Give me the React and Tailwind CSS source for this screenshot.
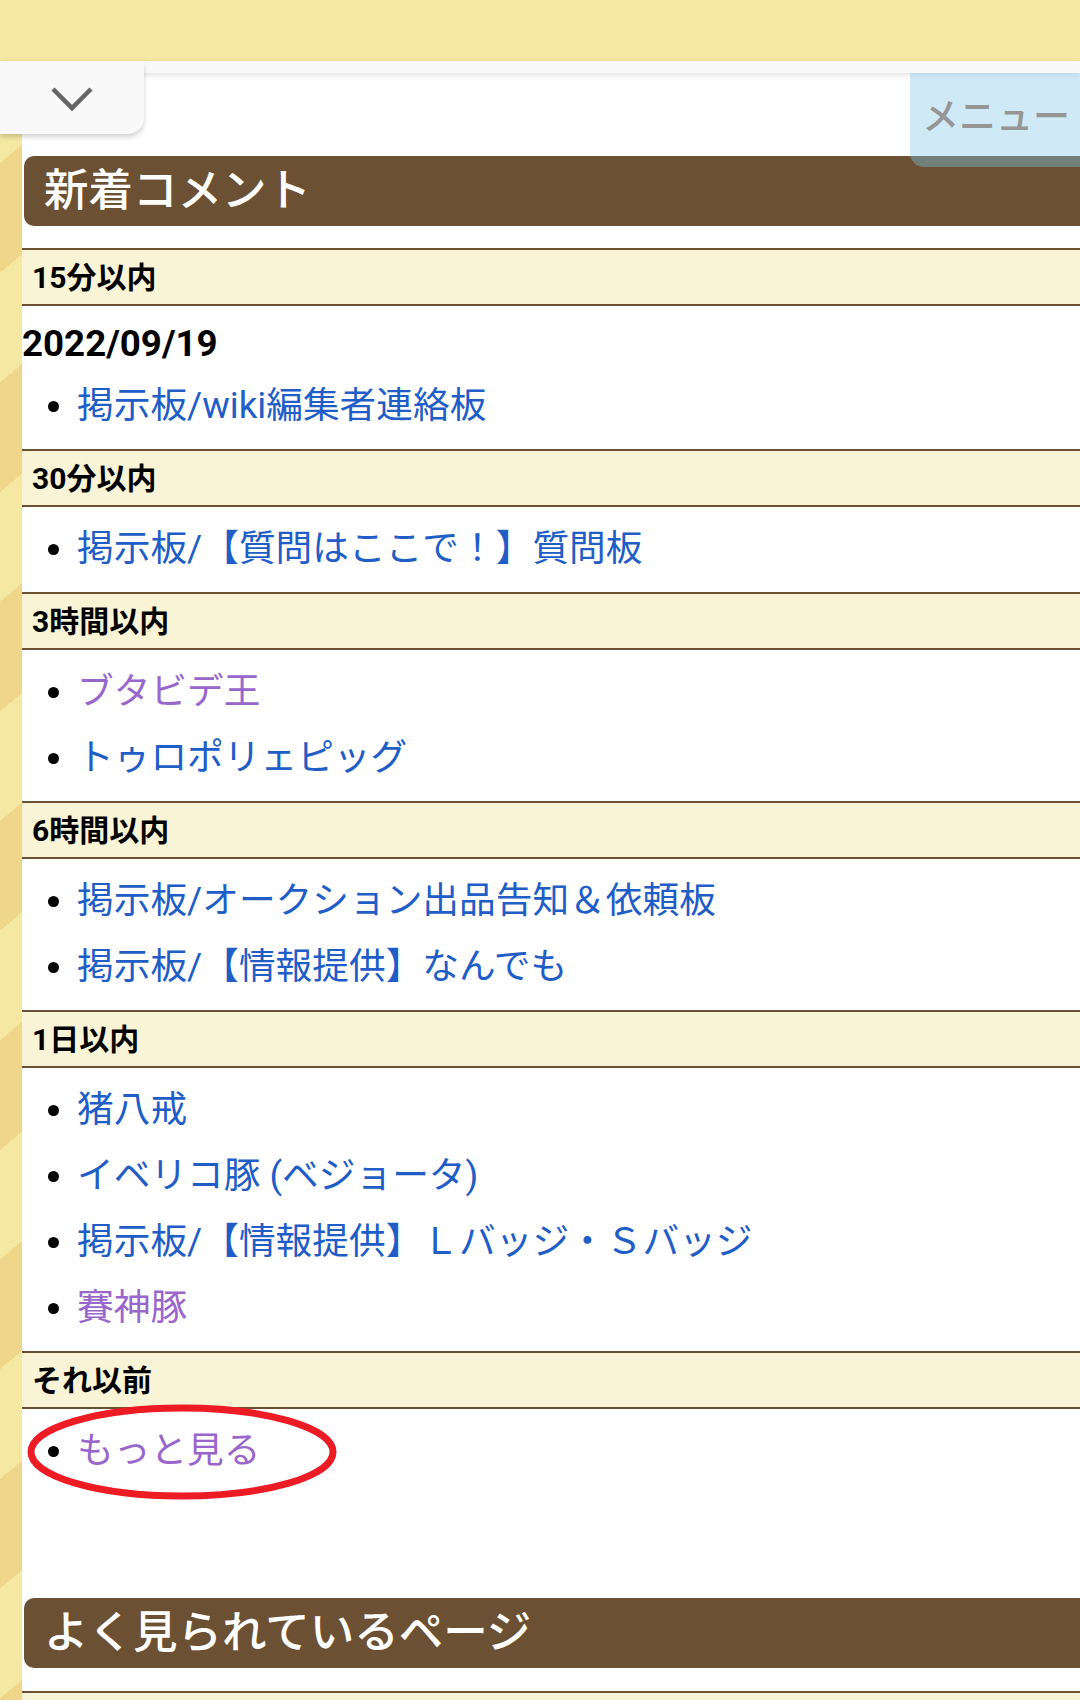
import React from "react";

const BLUE = "text-[#215dc6]";
const PURPLE = "text-[#9966cc]";

function HeaderRow({ children }) {
  return (
    <div className="h-[58px] border-y-2 border-[#6b5033] bg-[#faf4d6] flex items-center pl-[10px] text-[30px] font-bold text-black">
      {children}
    </div>
  );
}

function Item({ children, visited }) {
  return (
    <li className="h-[66px] flex items-center">
      <span className="ml-[26px] w-[11px] h-[11px] rounded-full bg-black shrink-0" />
      <span className={`ml-[18px] text-[36.7px] whitespace-nowrap ${visited ? PURPLE : BLUE}`}>{children}</span>
    </li>
  );
}

function Heading({ children, className = "" }) {
  return (
    <div className={`ml-[2px] h-[70px] rounded-l-[10px] bg-[#6b5033] flex items-center pl-[20px] text-[44.5px] font-medium text-white whitespace-nowrap ${className}`}>
      {children}
    </div>
  );
}

export default function App() {
  return (
    <div
      className="relative w-[1080px] h-[1700px] overflow-hidden bg-white"
      style={{ fontFamily: 'Roboto, "Noto Sans CJK JP", "Noto Sans", sans-serif' }}
    >
      <div className="h-[61px] bg-[#f5e8a2]" />
      <div className="relative z-10 h-[12px] bg-[#f9f9f9] shadow-[0_2px_6px_rgba(0,0,0,0.12)]" />
      <div className="flex">
        <div className="w-[22px] shrink-0 h-[1627px] bg-[image:repeating-linear-gradient(140deg,#f5e8a2_0_69px,#efd68b_69px_153px,#f5e8a2_153px_168px)]" />
        <div className="flex-1 min-w-0 pt-[83px]">
          <Heading>新着コメント</Heading>
          <div className="mt-[22px]">
            <HeaderRow>15分以内</HeaderRow>
            <div className="pt-[9px] pb-[10px]">
              <div className="h-[58px] flex items-center text-[36.7px] font-bold text-black">2022/09/19</div>
              <ul>
                <Item>掲示板/wiki編集者連絡板</Item>
              </ul>
            </div>
            <HeaderRow>30分以内</HeaderRow>
            <ul className="pt-[9px] pb-[10px]">
              <Item>掲示板/【質問はここで！】質問板</Item>
            </ul>
            <HeaderRow>3時間以内</HeaderRow>
            <ul className="pt-[9px] pb-[10px]">
              <Item visited>ブタビデ王</Item>
              <Item>トゥロポリェピッグ</Item>
            </ul>
            <HeaderRow>6時間以内</HeaderRow>
            <ul className="pt-[9px] pb-[10px]">
              <Item>掲示板/オークション出品告知＆依頼板</Item>
              <Item>掲示板/【情報提供】なんでも</Item>
            </ul>
            <HeaderRow>1日以内</HeaderRow>
            <ul className="pt-[9px] pb-[10px]">
              <Item>猪八戒</Item>
              <Item>イベリコ豚 (ベジョータ)</Item>
              <Item>掲示板/【情報提供】Ｌバッジ・Ｓバッジ</Item>
              <Item visited>賽神豚</Item>
            </ul>
            <HeaderRow>それ以前</HeaderRow>
            <ul className="pt-[9px] pb-[10px]">
              <Item visited>もっと見る</Item>
            </ul>
          </div>
          <Heading className="mt-[104px]">よく見られているページ</Heading>
          <div className="mt-[23px]">
            <HeaderRow>&nbsp;</HeaderRow>
          </div>
        </div>
      </div>

      {/* collapse tab */}
      <div className="absolute left-0 top-[61px] z-20 w-[144px] h-[73px] bg-[#f9f9f9] rounded-br-[16px] shadow-[0_3px_5px_rgba(0,0,0,0.18)] flex items-center justify-center pt-[2px]">
        <svg width="44" height="30" viewBox="0 0 44 30">
          <path d="M3 5 L22 24 L41 5" fill="none" stroke="#666666" strokeWidth="4.5" />
        </svg>
      </div>

      {/* menu button */}
      <div className="absolute right-0 top-[73px] z-20 w-[170px] h-[94px] rounded-bl-[14px] bg-[rgba(132,201,232,0.39)] flex items-center pl-[12px] pb-[4px]">
        <span className="text-[37px] font-medium text-[#969696] whitespace-nowrap">メニュー</span>
      </div>

      {/* red annotation ellipse */}
      <svg className="absolute left-[26px] top-[1403px] z-30" width="312" height="98" viewBox="0 0 312 98">
        <ellipse cx="156" cy="49" rx="151" ry="44" fill="none" stroke="#ed1c24" strokeWidth="7" />
      </svg>
    </div>
  );
}
